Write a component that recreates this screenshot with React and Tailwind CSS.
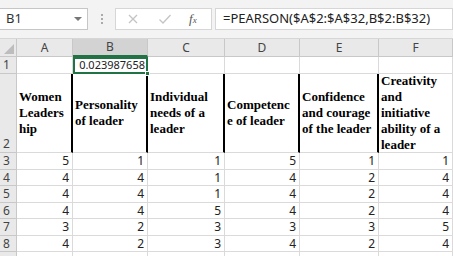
import React from "react";

const cols = ["A", "B", "C", "D", "E", "F"];

const headers = [
  ["Women", "Leaders", "hip"],
  ["Personality", "of leader"],
  ["Individual", "needs of a", "leader"],
  ["Competenc", "e of leader"],
  ["Confidence", "and courage", "of the leader"],
  ["Creativity", "and", "initiative", "ability of a", "leader"],
];

const data = [
  [5, 1, 1, 5, 1, 1],
  [4, 4, 1, 4, 2, 4],
  [4, 4, 1, 4, 2, 4],
  [4, 4, 5, 4, 2, 4],
  [3, 2, 3, 3, 3, 5],
  [4, 2, 3, 4, 2, 4],
];

const rowHeights = ["h-[17px]", "h-[16px]", "h-[17px]", "h-[16px]", "h-[17px]", "h-[16px]"];

const ui = { fontFamily: '"Noto Sans", "Open Sans", sans-serif' };
const serif = { fontFamily: '"Liberation Serif", serif' };

const RowHead = ({ children, className = "" }) => (
  <div className={`flex items-end pl-[3px] pb-[1px] bg-[#e9e9e9] border-r border-b border-[#c8c8c8] text-[12px] leading-[14px] text-[#444] ${className}`}>
    {children}
  </div>
);

const App = () => {
  return (
    <div className="w-[453px] h-[256px] overflow-hidden bg-white" style={ui}>
      {/* formula bar */}
      <div className="h-[39px] bg-[#f3f3f3] border-b border-[#d6d6d6] flex items-center">
        <div className="-ml-px w-[89px] h-[22px] bg-white border border-[#c6c6c6] flex items-center justify-between pl-[6px] pr-[5px]">
          <span className="text-[13px] text-[#333]">B1</span>
          <span className="w-0 h-0 border-l-[4px] border-r-[4px] border-t-[4px] border-l-transparent border-r-transparent border-t-[#777]" />
        </div>
        <div className="w-[27px] flex flex-col items-center gap-[2px]">
          <span className="w-[2px] h-[2px] bg-[#aaa]" />
          <span className="w-[2px] h-[2px] bg-[#aaa]" />
          <span className="w-[2px] h-[2px] bg-[#aaa]" />
        </div>
        <div className="w-[97px] h-[22px] bg-white border border-[#d6d6d6] flex items-center">
          <svg width="12" height="12" viewBox="0 0 12 12" className="ml-[11px]">
            <path d="M2 2L10 10M10 2L2 10" stroke="#c4c4c4" strokeWidth="1.3" />
          </svg>
          <svg width="14" height="12" viewBox="0 0 14 12" className="ml-[19px]">
            <path d="M1.5 6.5L5 10L12.5 2" fill="none" stroke="#c4c4c4" strokeWidth="1.3" />
          </svg>
          <span className="ml-[17px] text-[13px] italic text-[#555]" style={serif}>f<span className="text-[9px]">x</span></span>
        </div>
        <div className="ml-[3px] flex-1 h-[22px] bg-white border border-[#d6d6d6] flex items-center pl-[7px]">
          <span className="text-[13px] text-[#222] whitespace-nowrap">=PEARSON($A$2:$A$32,B$2:B$32)</span>
        </div>
      </div>

      {/* sheet */}
      <div className="grid grid-cols-[17px_56px_75px_77px_75px_79px_74px]">
        {/* column headers */}
        <div className="h-[18px] bg-[#e9e9e9] border-r border-b border-[#c8c8c8] flex items-end justify-end p-[2px]">
          <span className="w-0 h-0" style={{ borderBottom: "10px solid #bdbdbd", borderLeft: "10px solid transparent" }} />
        </div>
        {cols.map((c) => (
          <div
            key={c}
            className={`h-[18px] flex items-center justify-center text-[12px] text-[#444] border-r border-[#c8c8c8] ${
              c === "B" ? "bg-[#d3d3d3] border-b-2 border-b-[#217346]" : "bg-[#e9e9e9] border-b border-b-[#c8c8c8]"
            }`}
          >
            {c}
          </div>
        ))}

        {/* row 1 */}
        <RowHead className="h-[17px] bg-[#dcdcdc] !items-center !pb-0">1</RowHead>
        {cols.map((c) => (
          <div
            key={c}
            className={`h-[17px] flex items-center justify-end text-[#222] ${
              c === "B" ? "relative border-2 border-[#217346] text-[11px] pr-[1px]" : "border-r border-b border-[#dadada]"
            }`}
          >
            {c === "B" && (
              <>
                0.023987658
                <span className="absolute -right-[4px] -bottom-[4px] w-[5px] h-[5px] bg-[#217346] border border-white" />
              </>
            )}
          </div>
        ))}

        {/* row 2 */}
        <RowHead className="h-[79px]">2</RowHead>
        {headers.map((lines, i) => (
          <div
            key={i}
            className={`h-[79px] flex flex-col justify-center pl-[2px] text-[13px] leading-[16px] font-bold text-black overflow-visible border-b border-[#dadada] ${
              i < 5 ? "border-r-2 border-r-black" : "border-r border-r-[#dadada]"
            }`}
            style={serif}
          >
            {lines.map((l) => (
              <span key={l} className="whitespace-nowrap">{l}</span>
            ))}
          </div>
        ))}

        {/* data rows */}
        {data.map((row, r) => (
          <React.Fragment key={r}>
            <RowHead className={`${rowHeights[r]} !items-center !pb-0`}>{r + 3}</RowHead>
            {row.map((v, i) => (
              <div
                key={i}
                className={`${rowHeights[r]} flex items-center justify-end pr-[3px] text-[12px] text-[#222] border-r border-b border-[#dadada]`}
              >
                {v}
              </div>
            ))}
          </React.Fragment>
        ))}

        {/* row 9, cut off by the window */}
        <RowHead className="h-[17px]" />
        {cols.map((c) => (
          <div key={c} className="h-[17px] border-r border-b border-[#dadada]" />
        ))}
      </div>
    </div>
  );
};

export default App;
